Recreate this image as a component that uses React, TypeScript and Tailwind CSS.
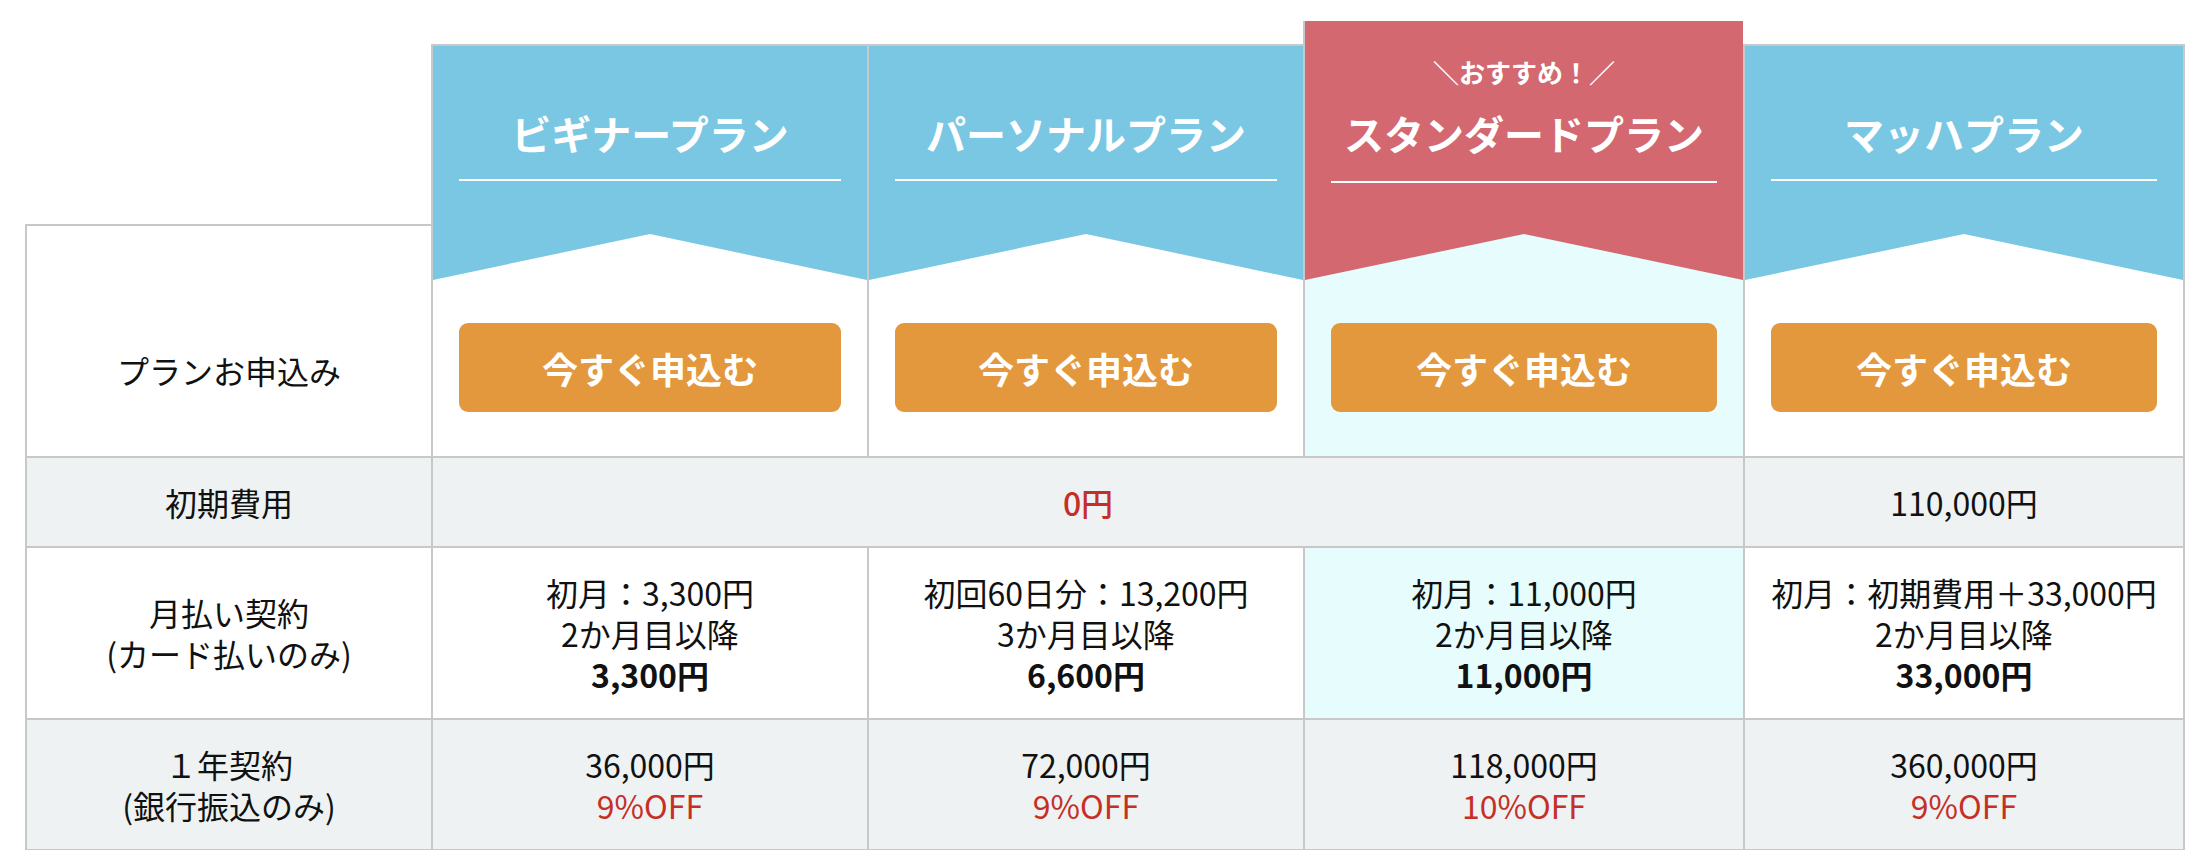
import React from 'react';

type Plan = {
  name: string;
  width: string;
  featured?: boolean;
  monthly: [string, string, string];
  yearly: [string, string];
};

const plans: Plan[] = [
  { name: 'ビギナープラン', width: 'w-[436px]', monthly: ['初月：3,300円', '2か月目以降', '3,300円'], yearly: ['36,000円', '9%OFF'] },
  { name: 'パーソナルプラン', width: 'w-[436px]', monthly: ['初回60日分：13,200円', '3か月目以降', '6,600円'], yearly: ['72,000円', '9%OFF'] },
  { name: 'スタンダードプラン', width: 'w-[440px]', featured: true, monthly: ['初月：11,000円', '2か月目以降', '11,000円'], yearly: ['118,000円', '10%OFF'] },
  { name: 'マッハプラン', width: 'w-[442px]', monthly: ['初月：初期費用＋33,000円', '2か月目以降', '33,000円'], yearly: ['360,000円', '9%OFF'] },
];

function PlanHead({ plan, last }: { plan: Plan; last: boolean }) {
  const edge = last ? 'border-r-2' : '';
  if (plan.featured) {
    return (
      <div className={`${plan.width} ${edge} border-l-2 border-[#c8c8c8] bg-[#e6fcfd] flex flex-col`}>
        <div className="h-[259px] bg-[#d36871] px-[26px] pt-[33px] [clip-path:polygon(0_0,100%_0,100%_100%,50%_calc(100%_-_46px),0_100%)]">
          <div className="text-center text-white font-bold text-[26px] leading-[36px]">＼おすすめ！／</div>
          <div className="mt-[15px] text-center text-white font-bold text-[40px] leading-[56px] pb-[20px] border-b-2 border-white">
            {plan.name}
          </div>
        </div>
        <div className="px-[26px] pt-[43px] pb-[44px]">
          <ApplyButton />
        </div>
      </div>
    );
  }
  return (
    <div className={`${plan.width} ${edge} border-l-2 border-t-2 border-[#c8c8c8] bg-white flex flex-col`}>
      <div className="h-[234px] bg-[#7ac7e4] px-[26px] pt-[59px] [clip-path:polygon(0_0,100%_0,100%_100%,50%_calc(100%_-_46px),0_100%)]">
        <div className="text-center text-white font-bold text-[40px] leading-[56px] pb-[18px] border-b-2 border-white">
          {plan.name}
        </div>
      </div>
      <div className="px-[26px] pt-[43px] pb-[44px]">
        <ApplyButton />
      </div>
    </div>
  );
}

function ApplyButton() {
  return (
    <button className="w-full h-[89px] rounded-[9px] bg-[#e3983e] text-white font-bold text-[36px] leading-none flex items-center justify-center">
      今すぐ申込む
    </button>
  );
}

function Label({ lines }: { lines: string[] }) {
  return (
    <div className="w-[406px] border-l-2 border-[#c8c8c8] flex flex-col items-center justify-center">
      {lines.map((l) => (
        <div key={l}>{l}</div>
      ))}
    </div>
  );
}

export default function App() {
  return (
    <div className="bg-white w-[2212px] h-[850px] overflow-hidden pl-[25px] pt-[21px] font-['Noto_Sans_CJK_JP','Noto_Sans',sans-serif] text-[32px] leading-[41px] text-[#111]">
      <div className="w-[2160px]">
        {/* header */}
        <div className="flex items-end">
          <div className="w-[406px] h-[232px] border-l-2 border-t-2 border-[#c8c8c8] flex items-center justify-center pt-[58px]">
            プランお申込み
          </div>
          {plans.map((p, i) => (
            <PlanHead key={p.name} plan={p} last={i === plans.length - 1} />
          ))}
        </div>

        {/* 初期費用 */}
        <div className="flex h-[90px] border-t-2 border-r-2 border-[#c8c8c8] bg-[#eef2f3]">
          <Label lines={['初期費用']} />
          <div className="w-[1312px] border-l-2 border-[#c8c8c8] flex items-center justify-center text-[#c62f25] font-medium">
            0円
          </div>
          <div className="flex-1 border-l-2 border-[#c8c8c8] flex items-center justify-center">110,000円</div>
        </div>

        {/* 月払い契約 */}
        <div className="flex h-[172px] border-t-2 border-r-2 border-[#c8c8c8] bg-white">
          <Label lines={['月払い契約', '(カード払いのみ)']} />
          {plans.map((p) => (
            <div
              key={p.name}
              className={`${p.width} ${p.featured ? 'bg-[#e6fcfd]' : ''} last:w-[440px] border-l-2 border-[#c8c8c8] flex flex-col items-center justify-center`}
            >
              <div>{p.monthly[0]}</div>
              <div>{p.monthly[1]}</div>
              <div className="font-bold">{p.monthly[2]}</div>
            </div>
          ))}
        </div>

        {/* 1年契約 */}
        <div className="flex h-[133px] border-t-2 border-b-2 border-r-2 border-[#c8c8c8] bg-[#eef2f3]">
          <Label lines={['１年契約', '(銀行振込のみ)']} />
          {plans.map((p) => (
            <div key={p.name} className={`${p.width} last:w-[440px] border-l-2 border-[#c8c8c8] flex flex-col items-center justify-center`}>
              <div>{p.yearly[0]}</div>
              <div className="text-[#c62f25]">{p.yearly[1]}</div>
            </div>
          ))}
        </div>
      </div>
    </div>
  );
}
